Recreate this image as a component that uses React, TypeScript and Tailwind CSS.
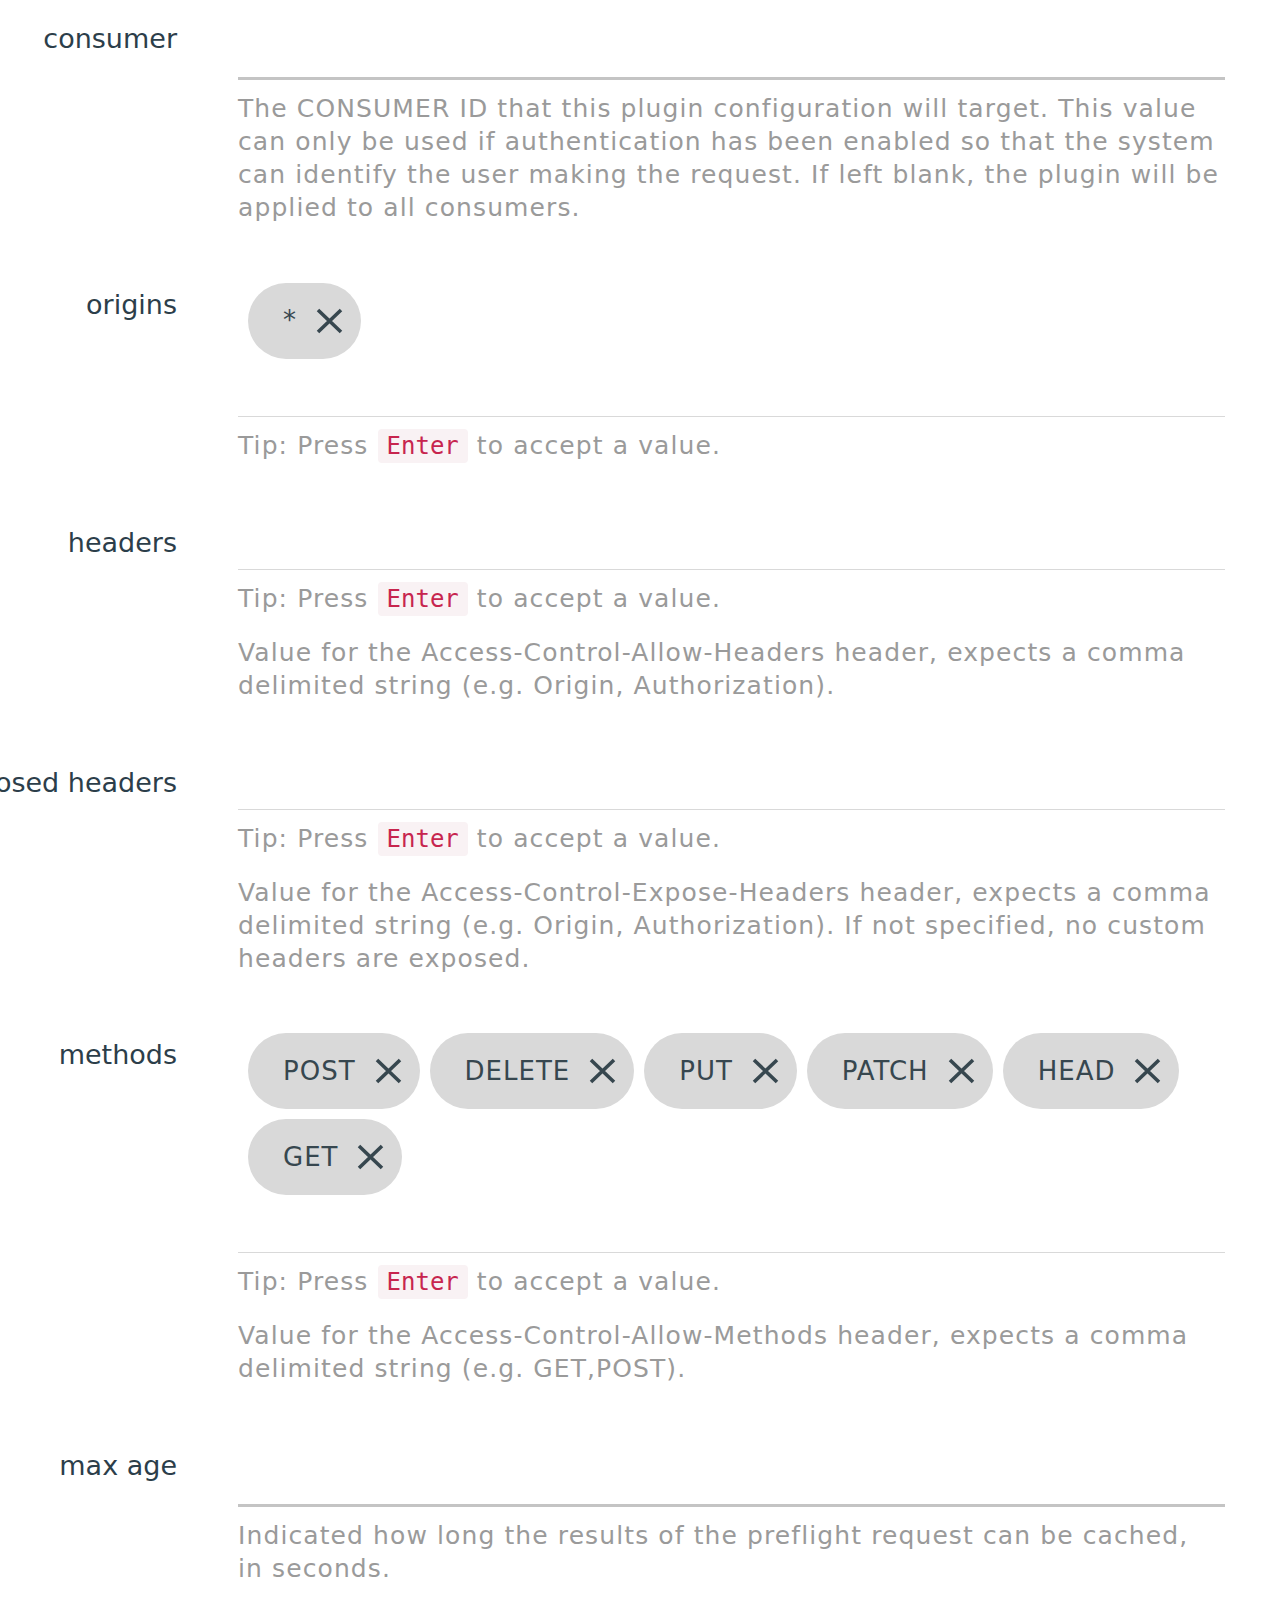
import React from "react";

function XIcon() {
  return (
    <svg width="27" height="26" viewBox="0 0 27 26" aria-hidden="true">
      <path d="M2 2L25 24M25 2L2 24" stroke="#37474f" strokeWidth="3.6" fill="none" />
    </svg>
  );
}

function Chip({ text }: { text: string }) {
  return (
    <span className="flex h-[76px] items-center gap-[19px] rounded-full bg-[#d9d9d9] pl-[35px] pr-[18px] text-[26px] tracking-[1px] text-[#37474f]">
      {text}
      <XIcon />
    </span>
  );
}

function Field({ label, children }: { label: string; children: React.ReactNode }) {
  return (
    <div className="mb-[58.5px] flex gap-[61px]">
      <div className="flex w-[177px] shrink-0 justify-end">
        <span className="whitespace-nowrap text-[27px] leading-[44px] text-[#2c3e4a]">
          {label}
        </span>
      </div>
      <div className="w-[987px] shrink-0">{children}</div>
    </div>
  );
}

function Desc({ children, className = "" }: { children: React.ReactNode; className?: string }) {
  return (
    <p className={"text-[25px] leading-[33px] tracking-[1.1px] text-[#9a9a9a] " + className}>
      {children}
    </p>
  );
}

function Tip() {
  return (
    <Desc className="mt-[12px]">
      Tip: Press{" "}
      <code className="rounded-[4px] bg-[#f9f2f4] px-[9px] py-[3px] font-['DejaVu_Sans_Mono',monospace] text-[24px] tracking-normal text-[#c7254e]">
        Enter
      </code>{" "}
      to accept a value.
    </Desc>
  );
}

function TagInput({ chips }: { chips: string[] }) {
  return (
    <>
      {chips.length > 0 && (
        <div className="mb-[9px] ml-[10px] flex flex-wrap gap-[10px]">
          {chips.map((c) => (
            <Chip key={c} text={c} />
          ))}
        </div>
      )}
      <input className="block h-[49px] w-full border-b border-[#d9d9d9] outline-none" />
      <Tip />
    </>
  );
}

export default function App() {
  return (
    <div className="min-h-screen overflow-hidden bg-white pt-[17px] font-['DejaVu_Sans',sans-serif]">
      {/* consumer */}
      <Field label="consumer">
        <input className="block h-[63px] w-full border-b-[3px] border-[#c4c4c4] outline-none" />
        <Desc className="mt-[12px]">
          The CONSUMER ID that this plugin configuration will target. This value can only be used if
          authentication has been enabled so that the system can identify the user making the
          request. If left blank, the plugin will be applied to all consumers.
        </Desc>
      </Field>

      {/* origins */}
      <Field label="origins">
        <TagInput chips={["*"]} />
      </Field>

      {/* headers */}
      <Field label="headers">
        <TagInput chips={[]} />
        <Desc className="mt-[20px]">
          Value for the Access-Control-Allow-Headers header, expects a comma delimited string (e.g.
          Origin, Authorization).
        </Desc>
      </Field>

      {/* exposed headers */}
      <Field label="exposed headers">
        <TagInput chips={[]} />
        <Desc className="mt-[20px]">
          Value for the Access-Control-Expose-Headers header, expects a comma delimited string (e.g.
          Origin, Authorization). If not specified, no custom headers are exposed.
        </Desc>
      </Field>

      {/* methods */}
      <Field label="methods">
        <TagInput chips={["POST", "DELETE", "PUT", "PATCH", "HEAD", "GET"]} />
        <Desc className="mt-[20px]">
          Value for the Access-Control-Allow-Methods header, expects a comma delimited string (e.g.
          GET,POST).
        </Desc>
      </Field>

      {/* max age */}
      <Field label="max age">
        <input className="block h-[63px] w-full border-b-[3px] border-[#c4c4c4] outline-none" />
        <Desc className="mt-[12px]">
          Indicated how long the results of the preflight request can be cached,
          <br />
          in seconds.
        </Desc>
      </Field>
    </div>
  );
}
